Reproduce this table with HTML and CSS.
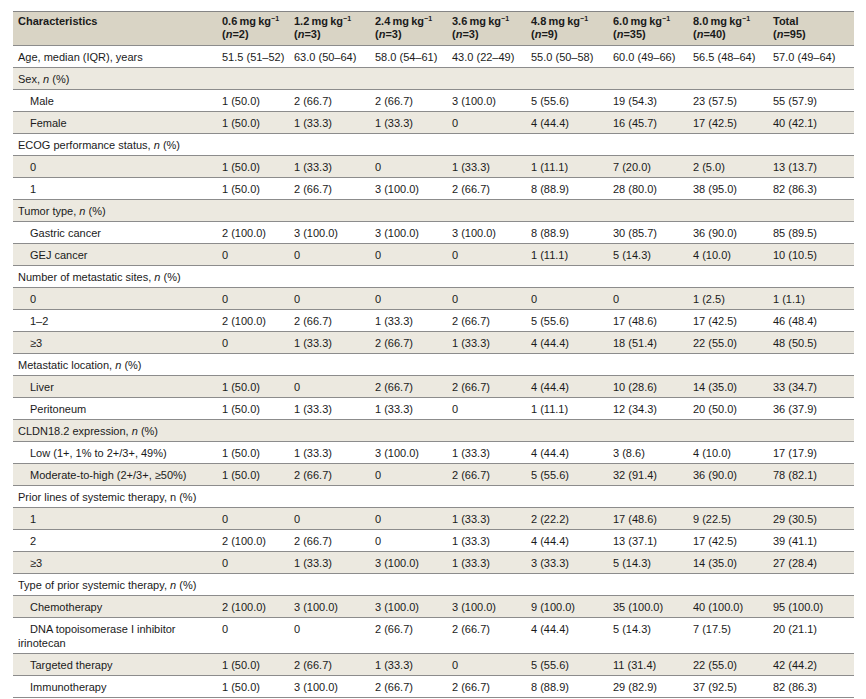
FILE: index.html
```html
<!DOCTYPE html>
<html>
<head>
<meta charset="utf-8">
<link rel="stylesheet" href="styles.css">
</head>
<body>
<table class="tbl">
<colgroup>
<col class="c1"><col class="c2"><col class="c3"><col class="c4"><col class="c5"><col class="c6"><col class="c7"><col class="c8"><col class="c9">
</colgroup>
<thead>
<tr class="head">
<th>Characteristics</th>
<th>0.6&thinsp;mg&thinsp;kg<sup>−1</sup><br>(<i>n</i>=2)</th>
<th>1.2&thinsp;mg&thinsp;kg<sup>−1</sup><br>(<i>n</i>=3)</th>
<th>2.4&thinsp;mg&thinsp;kg<sup>−1</sup><br>(<i>n</i>=3)</th>
<th>3.6&thinsp;mg&thinsp;kg<sup>−1</sup><br>(<i>n</i>=3)</th>
<th>4.8&thinsp;mg&thinsp;kg<sup>−1</sup><br>(<i>n</i>=9)</th>
<th>6.0&thinsp;mg&thinsp;kg<sup>−1</sup><br>(<i>n</i>=35)</th>
<th>8.0&thinsp;mg&thinsp;kg<sup>−1</sup><br>(<i>n</i>=40)</th>
<th>Total<br>(<i>n</i>=95)</th>
</tr>
</thead>
<tbody>
<tr><td>Age, median (IQR), years</td><td>51.5 (51–52)</td><td>63.0 (50–64)</td><td>58.0 (54–61)</td><td>43.0 (22–49)</td><td>55.0 (50–58)</td><td>60.0 (49–66)</td><td>56.5 (48–64)</td><td>57.0 (49–64)</td></tr>
<tr class="alt"><td colspan="9">Sex, <i>n</i> (%)</td></tr>
<tr><td class="sub">Male</td><td>1 (50.0)</td><td>2 (66.7)</td><td>2 (66.7)</td><td>3 (100.0)</td><td>5 (55.6)</td><td>19 (54.3)</td><td>23 (57.5)</td><td>55 (57.9)</td></tr>
<tr class="alt"><td class="sub">Female</td><td>1 (50.0)</td><td>1 (33.3)</td><td>1 (33.3)</td><td>0</td><td>4 (44.4)</td><td>16 (45.7)</td><td>17 (42.5)</td><td>40 (42.1)</td></tr>
<tr><td colspan="9">ECOG performance status, <i>n</i> (%)</td></tr>
<tr class="alt"><td class="sub">0</td><td>1 (50.0)</td><td>1 (33.3)</td><td>0</td><td>1 (33.3)</td><td>1 (11.1)</td><td>7 (20.0)</td><td>2 (5.0)</td><td>13 (13.7)</td></tr>
<tr><td class="sub">1</td><td>1 (50.0)</td><td>2 (66.7)</td><td>3 (100.0)</td><td>2 (66.7)</td><td>8 (88.9)</td><td>28 (80.0)</td><td>38 (95.0)</td><td>82 (86.3)</td></tr>
<tr class="alt"><td colspan="9">Tumor type, <i>n</i> (%)</td></tr>
<tr><td class="sub">Gastric cancer</td><td>2 (100.0)</td><td>3 (100.0)</td><td>3 (100.0)</td><td>3 (100.0)</td><td>8 (88.9)</td><td>30 (85.7)</td><td>36 (90.0)</td><td>85 (89.5)</td></tr>
<tr class="alt"><td class="sub">GEJ cancer</td><td>0</td><td>0</td><td>0</td><td>0</td><td>1 (11.1)</td><td>5 (14.3)</td><td>4 (10.0)</td><td>10 (10.5)</td></tr>
<tr><td colspan="9">Number of metastatic sites, <i>n</i> (%)</td></tr>
<tr class="alt"><td class="sub">0</td><td>0</td><td>0</td><td>0</td><td>0</td><td>0</td><td>0</td><td>1 (2.5)</td><td>1 (1.1)</td></tr>
<tr><td class="sub">1–2</td><td>2 (100.0)</td><td>2 (66.7)</td><td>1 (33.3)</td><td>2 (66.7)</td><td>5 (55.6)</td><td>17 (48.6)</td><td>17 (42.5)</td><td>46 (48.4)</td></tr>
<tr class="alt"><td class="sub">≥3</td><td>0</td><td>1 (33.3)</td><td>2 (66.7)</td><td>1 (33.3)</td><td>4 (44.4)</td><td>18 (51.4)</td><td>22 (55.0)</td><td>48 (50.5)</td></tr>
<tr><td colspan="9">Metastatic location, <i>n</i> (%)</td></tr>
<tr class="alt"><td class="sub">Liver</td><td>1 (50.0)</td><td>0</td><td>2 (66.7)</td><td>2 (66.7)</td><td>4 (44.4)</td><td>10 (28.6)</td><td>14 (35.0)</td><td>33 (34.7)</td></tr>
<tr><td class="sub">Peritoneum</td><td>1 (50.0)</td><td>1 (33.3)</td><td>1 (33.3)</td><td>0</td><td>1 (11.1)</td><td>12 (34.3)</td><td>20 (50.0)</td><td>36 (37.9)</td></tr>
<tr class="alt"><td colspan="9">CLDN18.2 expression, <i>n</i> (%)</td></tr>
<tr><td class="sub">Low (1+, 1% to 2+/3+, 49%)</td><td>1 (50.0)</td><td>1 (33.3)</td><td>3 (100.0)</td><td>1 (33.3)</td><td>4 (44.4)</td><td>3 (8.6)</td><td>4 (10.0)</td><td>17 (17.9)</td></tr>
<tr class="alt"><td class="sub">Moderate-to-high (2+/3+, ≥50%)</td><td>1 (50.0)</td><td>2 (66.7)</td><td>0</td><td>2 (66.7)</td><td>5 (55.6)</td><td>32 (91.4)</td><td>36 (90.0)</td><td>78 (82.1)</td></tr>
<tr><td colspan="9">Prior lines of systemic therapy, n (%)</td></tr>
<tr class="alt"><td class="sub">1</td><td>0</td><td>0</td><td>0</td><td>1 (33.3)</td><td>2 (22.2)</td><td>17 (48.6)</td><td>9 (22.5)</td><td>29 (30.5)</td></tr>
<tr><td class="sub">2</td><td>2 (100.0)</td><td>2 (66.7)</td><td>0</td><td>1 (33.3)</td><td>4 (44.4)</td><td>13 (37.1)</td><td>17 (42.5)</td><td>39 (41.1)</td></tr>
<tr class="alt"><td class="sub">≥3</td><td>0</td><td>1 (33.3)</td><td>3 (100.0)</td><td>1 (33.3)</td><td>3 (33.3)</td><td>5 (14.3)</td><td>14 (35.0)</td><td>27 (28.4)</td></tr>
<tr><td colspan="9">Type of prior systemic therapy, <i>n</i> (%)</td></tr>
<tr class="alt"><td class="sub">Chemotherapy</td><td>2 (100.0)</td><td>3 (100.0)</td><td>3 (100.0)</td><td>3 (100.0)</td><td>9 (100.0)</td><td>35 (100.0)</td><td>40 (100.0)</td><td>95 (100.0)</td></tr>
<tr><td class="sub">DNA topoisomerase I inhibitor irinotecan</td><td>0</td><td>0</td><td>2 (66.7)</td><td>2 (66.7)</td><td>4 (44.4)</td><td>5 (14.3)</td><td>7 (17.5)</td><td>20 (21.1)</td></tr>
<tr class="alt"><td class="sub">Targeted therapy</td><td>1 (50.0)</td><td>2 (66.7)</td><td>1 (33.3)</td><td>0</td><td>5 (55.6)</td><td>11 (31.4)</td><td>22 (55.0)</td><td>42 (44.2)</td></tr>
<tr><td class="sub">Immunotherapy</td><td>1 (50.0)</td><td>3 (100.0)</td><td>2 (66.7)</td><td>2 (66.7)</td><td>8 (88.9)</td><td>29 (82.9)</td><td>37 (92.5)</td><td>82 (86.3)</td></tr>
</tbody>
</table>
</body>
</html>
```
FILE: styles.css
```css
html, body {
  margin: 0;
  padding: 0;
  background: #ffffff;
}
body {
  font-family: "Liberation Sans", Arial, sans-serif;
  font-size: 11px;
  color: #1a1a1a;
}
.tbl {
  margin: 11px 0 0 13px;
  width: 841px;
  table-layout: fixed;
  border-collapse: collapse;
  border-top: 1px solid #858585;
}
.c1 { width: 204px; }
.c2 { width: 72px; }
.c3 { width: 81px; }
.c4 { width: 77px; }
.c5 { width: 79px; }
.c6 { width: 82px; }
.c7 { width: 80px; }
.c8 { width: 80px; }
.c9 { width: 86px; }
.tbl th, .tbl td {
  text-align: left;
  vertical-align: top;
  padding: 4px 5px 3px 5px;
  line-height: 14px;
  border-bottom: 1px solid #8c8c8c;
  white-space: nowrap;
}
.tbl th {
  font-weight: bold;
  line-height: 13px;
  padding: 3px 5px 4px 5px;
  background: #d9d4c5;
}
.tbl sup {
  font-size: 7px;
  line-height: 0;
  vertical-align: 4px;
}
.tbl td.sub {
  text-indent: 12px;
  white-space: normal;
}
.tbl tr.alt td {
  background: #ece9e0;
}
```
